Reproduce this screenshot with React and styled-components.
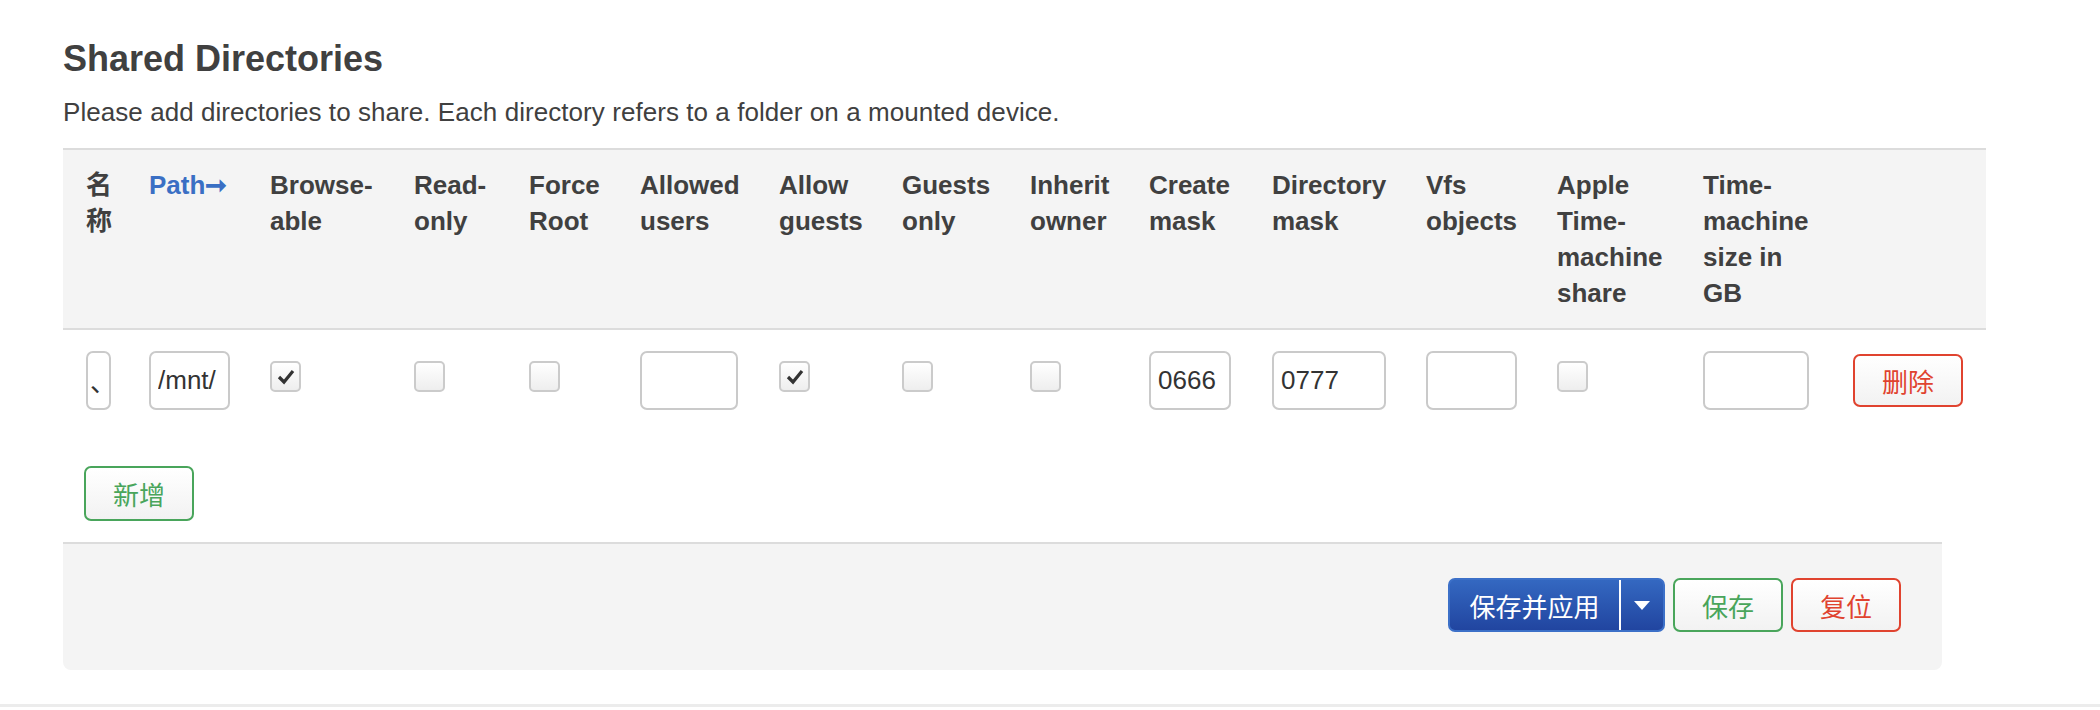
import React from "react"
import styled, { createGlobalStyle } from "styled-components"

const GlobalStyle = createGlobalStyle`
  body {
    margin: 0;
    background: #fff;
    font-family: "Liberation Sans", "Noto Sans CJK SC", sans-serif;
    color: #404040;
  }
`

const columns = "63px 121px 144px 115px 111px 139px 123px 128px 119px 123px 154px 131px 146px 150px 133px"

const headers = [
  ["名", "称"],
  ["Path➞"],
  ["Browse-", "able"],
  ["Read-", "only"],
  ["Force", "Root"],
  ["Allowed", "users"],
  ["Allow", "guests"],
  ["Guests", "only"],
  ["Inherit", "owner"],
  ["Create", "mask"],
  ["Directory", "mask"],
  ["Vfs", "objects"],
  ["Apple", "Time-", "machine", "share"],
  ["Time-", "machine", "size in", "GB"],
  [],
]

const Page = styled.div`
  box-sizing: border-box;
  height: 707px;
  padding: 39px 0 0 63px;
  border-bottom: 3px solid #ececec;
`

const Title = styled.h2`
  margin: 0;
  font-size: 36px;
  line-height: 40px;
  font-weight: bold;
  color: #404040;
`

const Description = styled.p`
  margin: 15px 0 0;
  font-size: 26px;
  line-height: 36px;
  letter-spacing: 0.06px;
  color: #404040;
`

const Table = styled.div`
  width: 1923px;
  margin-top: 18px;
`

const HeaderRow = styled.div`
  display: grid;
  grid-template-columns: ${columns};
  padding: 17px 0 17px 23px;
  background: #f4f4f4;
  border-top: 2px solid #dcdcdc;
  border-bottom: 2px solid #dcdcdc;
`

const HeaderCell = styled.div`
  font-size: 26px;
  line-height: 36px;
  font-weight: bold;
  color: ${p => (p.$link ? "#3a6fc4" : "#404040")};
`

const Row = styled.div`
  display: grid;
  grid-template-columns: ${columns};
  align-items: start;
  padding: 21px 0 20px 23px;
`

const TextInput = styled.input`
  box-sizing: border-box;
  width: ${p => p.$w}px;
  height: 59px;
  padding: 0 ${p => (p.$tight ? 2 : 7)}px;
  border: 2px solid #cacaca;
  border-radius: 7px;
  background: #fff;
  font-family: "Liberation Sans", "Noto Sans CJK SC", sans-serif;
  font-size: 26px;
  color: #333;
  outline: none;
`

const Box = styled.span`
  box-sizing: border-box;
  display: flex;
  align-items: center;
  justify-content: center;
  width: 31px;
  height: 31px;
  margin-top: 10px;
  border: 2px solid #cbcbcb;
  border-radius: 5px;
  background: linear-gradient(#ffffff, #eeeeee);
`

const Button = styled.button`
  box-sizing: border-box;
  width: 110px;
  height: ${p => p.$h || 54}px;
  margin-top: ${p => p.$mt || 0}px;
  border: 2px solid ${p => p.$color};
  border-radius: 7px;
  background: linear-gradient(#ffffff, #f2f2f2);
  color: ${p => p.$color};
  font-family: "Liberation Sans", "Noto Sans CJK SC", sans-serif;
  font-size: 26px;
  padding: 0;
`

const AddArea = styled.div`
  padding: 36px 0 0 21px;
`

const Footer = styled.div`
  box-sizing: border-box;
  width: 1879px;
  margin-top: 21px;
  padding: 34px 41px 38px;
  display: flex;
  justify-content: flex-end;
  gap: 8px;
  background: #f4f4f4;
  border-top: 2px solid #dcdcdc;
  border-radius: 0 0 8px 8px;
`

const Split = styled.div`
  box-sizing: border-box;
  display: flex;
  height: 54px;
  border: 2px solid #3c70c8;
  border-radius: 7px;
  background: linear-gradient(#3468c1, #2145a0);
  color: #fff;
  overflow: hidden;
`

const SplitMain = styled.span`
  display: flex;
  align-items: center;
  justify-content: center;
  width: 169px;
  font-size: 26px;
  border-right: 2px solid #fff;
`

const SplitCaret = styled.span`
  display: flex;
  align-items: center;
  justify-content: center;
  width: 42px;
`

function Check({ on }) {
  return (
    <Box>
      {on && (
        <svg width="18" height="16" viewBox="0 0 18 16">
          <polyline points="2,8 7,13 16,2" fill="none" stroke="#333" strokeWidth="3.2" />
        </svg>
      )}
    </Box>
  )
}

export default function App() {
  return (
    <Page>
      <GlobalStyle />
      <Title>Shared Directories</Title>
      <Description>
        Please add directories to share. Each directory refers to a folder on a mounted device.
      </Description>
      <Table>
        <HeaderRow>
          {headers.map((lines, i) => (
            <HeaderCell key={i} $link={i === 1}>
              {lines.map((l, j) => (
                <React.Fragment key={j}>
                  {j > 0 && <br />}
                  {l}
                </React.Fragment>
              ))}
            </HeaderCell>
          ))}
        </HeaderRow>
        <Row>
          <TextInput $w={25} $tight readOnly value="、" />
          <TextInput $w={81} readOnly value="/mnt/" />
          <Check on />
          <Check />
          <Check />
          <TextInput $w={98} readOnly value="" />
          <Check on />
          <Check />
          <Check />
          <TextInput $w={82} readOnly value="0666" />
          <TextInput $w={114} readOnly value="0777" />
          <TextInput $w={91} readOnly value="" />
          <Check />
          <TextInput $w={106} readOnly value="" />
          <Button $color="#e0432f" $h={53} $mt={3}>删除</Button>
        </Row>
      </Table>
      <AddArea>
        <Button $color="#49a55b" $h={55}>新增</Button>
      </AddArea>
      <Footer>
        <Split>
          <SplitMain>保存并应用</SplitMain>
          <SplitCaret>
            <svg width="16" height="9" viewBox="0 0 16 9">
              <polygon points="0,0 16,0 8,9" fill="#fff" />
            </svg>
          </SplitCaret>
        </Split>
        <Button $color="#49a55b">保存</Button>
        <Button $color="#e0432f">复位</Button>
      </Footer>
    </Page>
  )
}
